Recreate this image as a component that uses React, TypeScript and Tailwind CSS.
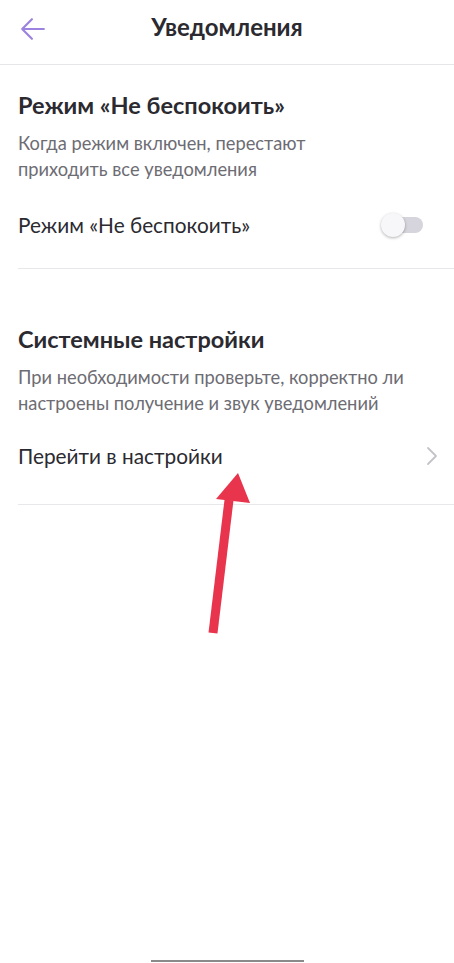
import React from "react";

function Toggle() {
  return (
    <div className="relative w-[42px] h-[26px] flex items-center mr-[13px]">
      <div className="w-[38px] h-[16px] rounded-full bg-[#d6d4dc] ml-[4px]" />
      <div className="absolute left-0 top-[1px] w-[24px] h-[24px] rounded-full bg-[#f7f7f9] shadow-[0_1px_3px_rgba(0,0,0,0.3)]" />
    </div>
  );
}

function Section({
  title,
  desc,
  row,
  right,
  rowPad,
}: {
  title: string;
  desc: string[];
  row: string;
  right: React.ReactNode;
  rowPad: string;
}) {
  return (
    <section className="ml-[18px] border-b border-[#e8e8ea]">
      <h2 className="text-[23.5px] leading-[28px] font-bold text-[#2b2a30]">{title}</h2>
      <p className="mt-[11px] text-[18.3px] leading-[26px] text-[#6d6c73]">
        {desc.map((d) => (
          <span key={d} className="block">
            {d}
          </span>
        ))}
      </p>
      <div className={"flex items-center justify-between pr-[18px] " + rowPad}>
        <span className="text-[20.8px] leading-[26px] text-[#2b2a30]">{row}</span>
        {right}
      </div>
    </section>
  );
}

export default function App() {
  return (
    <div
      className="relative w-[454px] h-[963px] bg-white overflow-hidden"
      style={{ fontFamily: "Lato, 'Noto Sans', sans-serif" }}
    >
      {/* шапка */}
      <header className="h-[65px] border-b border-[#e6e6e8] flex items-center relative">
        <button className="absolute left-[20px] top-[16px] w-[26px] h-[26px] text-[#9c83e0]">
          <svg viewBox="0 0 24 24" className="w-full h-full" fill="none" stroke="currentColor" strokeWidth="2" strokeLinecap="round" strokeLinejoin="round">
            <path d="M22 12H2M11 3l-9 9 9 9" />
          </svg>
        </button>
        <h1 className="w-full text-center text-[24px] font-bold text-[#2b2a30] -mt-[10px]">Уведомления</h1>
      </header>

      <div className="pt-[26px]">
        <Section
          title="Режим «Не беспокоить»"
          desc={["Когда режим включен, перестают", "приходить все уведомления"]}
          row="Режим «Не беспокоить»"
          right={<Toggle />}
          rowPad="pt-[30px] pb-[30px]"
        />
        <div className="h-[56px]" />
        <Section
          title="Системные настройки"
          desc={["При необходимости проверьте, корректно ли", "настроены получение и звук уведомлений"]}
          row="Перейти в настройки"
          right={
            <svg viewBox="0 0 12 20" className="w-[12px] h-[20px] -mr-[2px]" fill="none" stroke="#c4c3c9" strokeWidth="1.8" strokeLinecap="round" strokeLinejoin="round">
              <path d="M2 2l8 8-8 8" />
            </svg>
          }
          rowPad="pt-[27px] pb-[35px]"
        />
      </div>

      {/* стрелка-аннотация */}
      <svg className="absolute left-0 top-0 pointer-events-none" width="454" height="963" viewBox="0 0 454 963">
        <path d="M213 633L229 500" stroke="#e8344c" strokeWidth="9" />
        <path d="M238 473L216 499L250 503Z" fill="#e8344c" />
      </svg>

      <div className="absolute left-[151px] bottom-[1px] w-[153px] h-[2px] bg-[#8a8a8a]" />
    </div>
  );
}
